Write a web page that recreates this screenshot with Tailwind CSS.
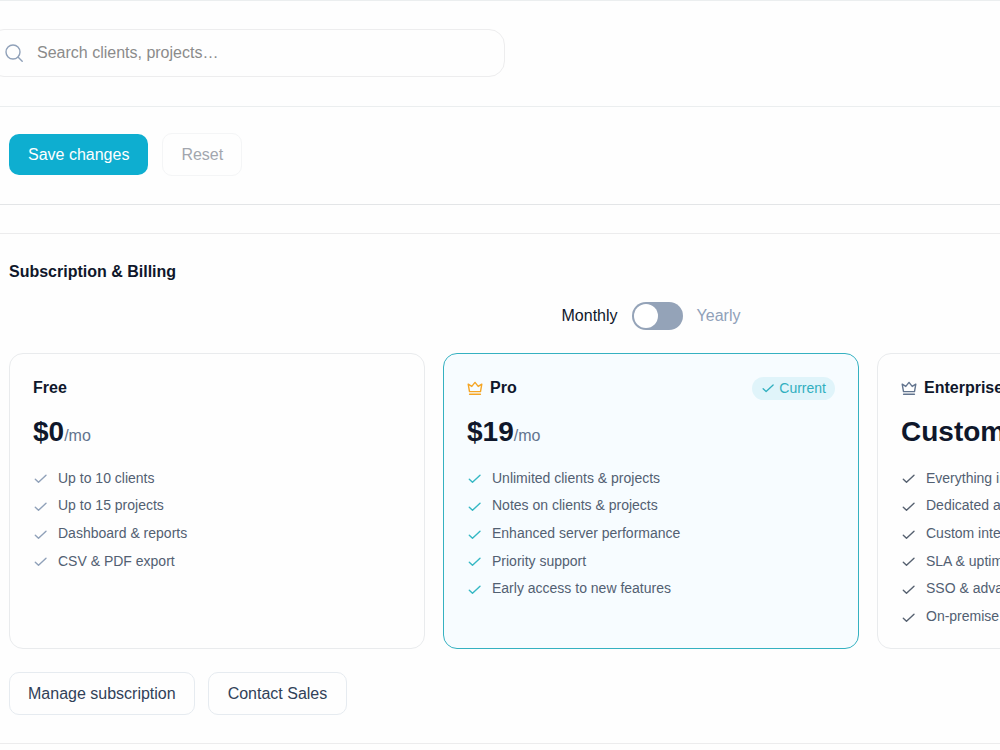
<!DOCTYPE html>
<html lang="en">
<head>
  <meta charset="UTF-8">
  <meta name="viewport" content="width=device-width, initial-scale=1.0">
  <title>Subscription &amp; Billing</title>
  <script src="https://cdn.jsdelivr.net/npm/@tailwindcss/browser@4"></script>
</head>
<body class="bg-[#fefefe] font-['Liberation_Sans',Arial,sans-serif] text-base text-slate-900 overflow-x-hidden">
<svg class="hidden">
  <symbol id="check" viewBox="0 0 15 15" fill="none" stroke="currentColor" stroke-width="1.4" stroke-linecap="round" stroke-linejoin="round">
    <path d="M2.3 8.3l3.2 3L13 4.2"/>
  </symbol>
  <symbol id="crown" viewBox="0 0 16 16" fill="none" stroke="currentColor" stroke-width="1.4" stroke-linecap="round" stroke-linejoin="round">
    <path d="M1.2 4.2l3.6 2.2L8 2.4l3.2 4 3.6-2.2-1.3 7.4h-11z"/>
    <path d="M2.6 14.3h10.8"/>
  </symbol>
</svg>

<header class="border-y border-[#ebeeef] pt-7 pb-[29px]">
  <label class="-ml-3 flex h-12 w-[517px] items-center gap-3.5 rounded-2xl border border-[#ededee] pl-4">
    <svg class="size-[18px] shrink-0 text-slate-400" viewBox="0 0 18 18" fill="none" stroke="currentColor" stroke-width="1.4" stroke-linecap="round">
      <circle cx="8" cy="8" r="7"/>
      <path d="M13.2 13.2l4 4"/>
    </svg>
    <input type="search" aria-label="Search" placeholder="Search clients, projects…" class="h-full flex-1 bg-transparent outline-none placeholder:text-[#8b8b8b]">
  </label>
</header>

<div class="flex items-center gap-3.5 border-b border-[#e3e5e7] px-[9px] pt-[26px] pb-7">
  <button type="button" class="h-[41px] rounded-[10px] bg-[#0eaed0] px-[19px] text-white">Save changes</button>
  <button type="button" class="h-[43px] rounded-[10px] border border-[#f4f5f6] px-[18px] text-[#a2a6ae]">Reset</button>
</div>

<section class="mt-7 border-y border-[#ececed] px-[9px] py-7">
  <div class="w-max min-w-full">
    <h2 class="font-bold leading-5">Subscription &amp; Billing</h2>

    <div class="mt-5 flex items-center justify-center gap-3.5">
      <span>Monthly</span>
      <label class="flex h-7 w-[51px] items-center rounded-full bg-[#94a3b8] p-0.5">
        <input type="checkbox" role="switch" aria-label="Yearly billing" class="size-6 appearance-none rounded-full bg-white checked:ml-auto">
      </label>
      <span class="text-slate-400">Yearly</span>
    </div>

    <div class="mt-[23px] grid grid-cols-[repeat(3,minmax(416px,1fr))] gap-[18px]">
      <article class="rounded-[14px] border border-[#e9ebed] px-[23px] pt-[22px] pb-[18px]">
        <h3 class="font-bold leading-6">Free</h3>
        <p class="mt-3.5 text-[28px] font-bold leading-9">$0<span class="text-base font-normal text-slate-500">/mo</span></p>
        <ul class="mt-3.5 grid h-[166px] grid-rows-6 text-sm text-[#526072]">
          <li class="flex items-center gap-2.5"><svg class="mt-0.5 size-[15px] text-slate-400"><use href="#check"/></svg>Up to 10 clients</li>
          <li class="flex items-center gap-2.5"><svg class="mt-0.5 size-[15px] text-slate-400"><use href="#check"/></svg>Up to 15 projects</li>
          <li class="flex items-center gap-2.5"><svg class="mt-0.5 size-[15px] text-slate-400"><use href="#check"/></svg>Dashboard &amp; reports</li>
          <li class="flex items-center gap-2.5"><svg class="mt-0.5 size-[15px] text-slate-400"><use href="#check"/></svg>CSV &amp; PDF export</li>
        </ul>
      </article>

      <article class="rounded-[14px] border border-[#35b1c1] bg-[#f7fcff] px-[23px] pt-[22px] pb-[18px]">
        <div class="flex h-6 items-center gap-[7px]">
          <svg class="size-4 text-[#f5a524]"><use href="#crown"/></svg>
          <h3 class="font-bold leading-6">Pro</h3>
          <span class="ml-auto flex h-[23px] items-center gap-1 rounded-full bg-[#e0f4fa] px-[9px] text-sm text-[#30afbf]">
            <svg class="size-3.5"><use href="#check"/></svg>Current
          </span>
        </div>
        <p class="mt-3.5 text-[28px] font-bold leading-9">$19<span class="text-base font-normal text-slate-500">/mo</span></p>
        <ul class="mt-3.5 grid h-[166px] grid-rows-6 text-sm text-[#526072]">
          <li class="flex items-center gap-2.5"><svg class="mt-0.5 size-[15px] text-[#35b8c4]"><use href="#check"/></svg>Unlimited clients &amp; projects</li>
          <li class="flex items-center gap-2.5"><svg class="mt-0.5 size-[15px] text-[#35b8c4]"><use href="#check"/></svg>Notes on clients &amp; projects</li>
          <li class="flex items-center gap-2.5"><svg class="mt-0.5 size-[15px] text-[#35b8c4]"><use href="#check"/></svg>Enhanced server performance</li>
          <li class="flex items-center gap-2.5"><svg class="mt-0.5 size-[15px] text-[#35b8c4]"><use href="#check"/></svg>Priority support</li>
          <li class="flex items-center gap-2.5"><svg class="mt-0.5 size-[15px] text-[#35b8c4]"><use href="#check"/></svg>Early access to new features</li>
        </ul>
      </article>

      <article class="rounded-[14px] border border-[#e9ebed] px-[23px] pt-[22px] pb-[18px]">
        <div class="flex h-6 items-center gap-[7px]">
          <svg class="size-4 text-slate-500"><use href="#crown"/></svg>
          <h3 class="font-bold leading-6">Enterprise</h3>
        </div>
        <p class="mt-3.5 text-[28px] font-bold leading-9">Custom</p>
        <ul class="mt-3.5 grid h-[166px] grid-rows-6 text-sm text-[#526072]">
          <li class="flex items-center gap-2.5"><svg class="mt-0.5 size-[15px] text-[#566170]"><use href="#check"/></svg>Everything in Pro</li>
          <li class="flex items-center gap-2.5"><svg class="mt-0.5 size-[15px] text-[#566170]"><use href="#check"/></svg>Dedicated account manager</li>
          <li class="flex items-center gap-2.5"><svg class="mt-0.5 size-[15px] text-[#566170]"><use href="#check"/></svg>Custom integrations</li>
          <li class="flex items-center gap-2.5"><svg class="mt-0.5 size-[15px] text-[#566170]"><use href="#check"/></svg>SLA &amp; uptime guarantee</li>
          <li class="flex items-center gap-2.5"><svg class="mt-0.5 size-[15px] text-[#566170]"><use href="#check"/></svg>SSO &amp; advanced security</li>
          <li class="flex items-center gap-2.5"><svg class="mt-0.5 size-[15px] text-[#566170]"><use href="#check"/></svg>On-premise deployment</li>
        </ul>
      </article>
    </div>

    <div class="mt-[23px] flex gap-[13px]">
      <button type="button" class="h-[43px] rounded-[10px] border border-[#e6ebf0] px-[18px] text-slate-700">Manage subscription</button>
      <button type="button" class="h-[43px] rounded-[10px] border border-[#e6ebf0] px-[19px] text-slate-700">Contact Sales</button>
    </div>
  </div>
</section>
</body>
</html>
